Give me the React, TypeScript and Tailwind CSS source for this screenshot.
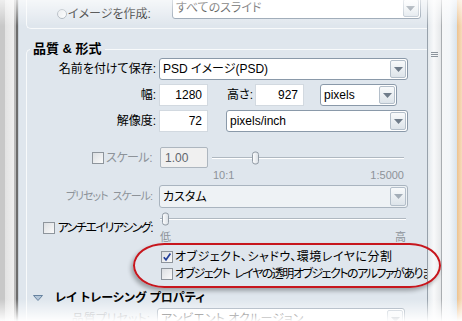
import React from "react";

const font = "font-['Liberation_Sans','Noto_Sans_CJK_JP',sans-serif]";

function Arrow({ disabled }: { disabled?: boolean }) {
  return (
    <div className="my-px mr-px flex w-[16px] items-center justify-center rounded-[2px] border border-[#b4bfca] bg-[linear-gradient(#f8fafb,#dde4ea)]">
      <svg width="9" height="5" viewBox="0 0 9 5">
        <path d="M0 0h9L4.5 5z" fill={disabled ? "#a3adb7" : "#6f7c8a"} />
      </svg>
    </div>
  );
}

function Select({ value, className, disabled }: { value: string; className?: string; disabled?: boolean }) {
  return (
    <div
      className={`flex h-[22px] shrink-0 items-stretch rounded-[3px] border ${
        disabled ? "border-[#a9b4bf] bg-[#eef2f5]" : "border-[#8a99a9] bg-white"
      } ${className ?? ""}`}
    >
      <span className="flex flex-1 items-center overflow-hidden whitespace-nowrap pl-[3px]">{value}</span>
      <Arrow disabled={disabled} />
    </div>
  );
}

function Field({ value, className, disabled }: { value: string; className?: string; disabled?: boolean }) {
  return (
    <div
      className={`flex shrink-0 items-center border ${
        disabled
          ? "h-[21px] justify-start rounded-[2px] border-[#adb6bf] bg-[#f0f0f0] pl-[4px] text-[#5f666d]"
          : "h-[22px] justify-end border-[#d2d9e0] bg-white pr-[5px]"
      } ${className ?? ""}`}
    >
      {value}
    </div>
  );
}

function Check({ checked }: { checked?: boolean }) {
  return (
    <span className="flex h-[12px] w-[12px] shrink-0 items-center justify-center border border-[#8e959c] bg-[linear-gradient(135deg,#dcdfe2,#fafafa)]">
      {checked && (
        <svg width="10" height="10" viewBox="0 0 10 10">
          <path d="M1.8 5.2 L4 7.8 L8.4 1.6" fill="none" stroke="#23409a" strokeWidth="1.7" />
        </svg>
      )}
    </span>
  );
}

function Slider({ thumb, className }: { thumb: string; className?: string }) {
  return (
    <div className={`relative ${className ?? ""}`}>
      <div className="absolute left-0 right-[2px] top-1/2 h-[2px] -translate-y-1/2 border-t border-[#afb8c1] bg-white" />
      <div
        className={`absolute top-1/2 h-[13px] w-[7px] -translate-y-1/2 rounded-[3px] border border-[#939ca6] bg-[linear-gradient(to_right,#fbfcfd,#dde2e7)] ${thumb}`}
      />
    </div>
  );
}

function Label({ children, className }: { children: React.ReactNode; className?: string }) {
  return <span className={`w-[129px] shrink-0 whitespace-nowrap text-right ${className ?? ""}`}>{children}</span>;
}

export default function App() {
  return (
    <div
      className={`relative flex h-[321px] w-[462px] overflow-hidden bg-white text-[12px] leading-none text-black ${font} [font-feature-settings:'palt']`}
    >
      {/* left window frame */}
      <div className="flex w-[19px] shrink-0">
        <div className="w-[5px] bg-[#c8c8c8]" />
        <div className="w-[9px] bg-[linear-gradient(to_right,#e2e2e2,#efefef)]" />
        <div className="w-[2px] bg-[#bababa]" />
        <div className="w-[2px] bg-[#6c6c6c]" />
        <div className="w-[1px] bg-[#c9d1d8]" />
      </div>

      {/* panel */}
      <div className="flex w-[408px] shrink-0 flex-col overflow-hidden bg-[#dfe6ed]">
        {/* previous group, bottom edge only */}
        <div className="ml-[7px] flex h-[29px] shrink-0 items-start rounded-bl-[5px] border-b border-l border-[#f8fafb]">
          <div className="ml-[30px] mt-[8px] flex items-center gap-[1px]">
            <span className="h-[10px] w-[10px] rounded-full border border-[#9ea8b2] bg-[linear-gradient(135deg,#dfe3e7,#ffffff)]" />
            <span className="whitespace-nowrap">イメージを作成:</span>
          </div>
          <Select className="-mt-[3px] ml-[21px] w-[249px]" value="すべてのスライド" />
        </div>

        {/* quality & format group */}
        <fieldset className="ml-[7px] mt-[13px] min-w-0 flex-1 rounded-tl-[5px] border-l border-t border-[#f8fafb] pt-[2px]">
          <legend className="ml-[3px] px-[3px] text-[13px] font-bold leading-[14px]">品質 &amp; 形式</legend>

          <div className="flex h-[22px] items-center">
            <Label>名前を付けて保存:</Label>
            <Select className="ml-[3px] w-[249px]" value="PSD イメージ(PSD)" />
          </div>

          <div className="mt-[4px] flex h-[22px] items-center">
            <Label>幅:</Label>
            <Field className="ml-[3px] w-[49px]" value="1280" />
            <span className="w-[45px] text-right">高さ:</span>
            <Field className="ml-[2px] w-[49px]" value="927" />
            <Select className="ml-[16px] w-[77px]" value="pixels" />
          </div>

          <div className="mt-[4px] flex h-[22px] items-center">
            <Label>解像度:</Label>
            <Field className="ml-[3px] w-[49px]" value="72" />
            <Select className="ml-[18px] w-[182px]" value="pixels/inch" />
          </div>

          <div className="mt-[15px] flex items-start">
            <div className="flex h-[21px] w-[129px] shrink-0 items-center justify-end gap-[2px] pr-[4px] text-[#8d9399]">
              <Check />
              <span className="tracking-[-0.5px]">スケール:</span>
            </div>
            <Field disabled className="ml-[4px] w-[48px]" value="1.00" />
            <div className="ml-[4px] w-[194px]">
              <Slider className="h-[21px]" thumb="left-[40px]" />
              <div className="mt-[2px] flex justify-between pl-px pr-[2px] text-[11px] leading-[11px] text-[#8d9399]">
                <span>10:1</span>
                <span>1:5000</span>
              </div>
            </div>
          </div>

          <div className="mt-[4px] flex h-[23px] items-center">
            <Label className="pr-[4px] text-[11px] tracking-[-1px] text-[#8d9399]">
              プリセット<span className="inline-block w-[5px]" />スケール:
            </Label>
            <Select disabled className="ml-[3px] h-[23px] w-[249px]" value="カスタム" />
          </div>

          <div className="mt-[5px] flex items-start">
            <div className="mt-[8px] flex h-[14px] w-[129px] shrink-0 items-center justify-end gap-[3px] pr-[4px]">
              <Check />
              <span className="whitespace-nowrap tracking-[-1.5px]">アンチエイリアシング:</span>
            </div>
            <div className="ml-[4px] w-[248px]">
              <Slider className="h-[12px]" thumb="left-[2px]" />
              <div className="mt-[7px] flex justify-between pr-[2px] text-[11px] leading-[11px] text-[#8d9399]">
                <span>低</span>
                <span>高</span>
              </div>
            </div>
          </div>

          <div className="ml-[134px] mt-[7px] flex h-[14px] items-center gap-[2px]">
            <Check checked />
            <span className="whitespace-nowrap tracking-[0.5px]">オブジェクト、シャドウ、環境レイヤに分割</span>
          </div>
          <div className="ml-[134px] mt-[3px] flex h-[14px] items-center gap-[2px]">
            <Check />
            <span className="whitespace-nowrap tracking-[-1.5px]">
              オブジェクト<span className="inline-block w-[5px]" />レイヤの透明オブジェクトのアルファがあります
            </span>
          </div>

          <div className="ml-[6px] mt-[10px] flex h-[14px] items-center">
            <svg width="10" height="6" viewBox="0 0 10 6">
              <path d="M0.5 0.5h9L5 5.5z" fill="#b4c6d8" stroke="#66829f" strokeWidth="1" />
            </svg>
            <span className="ml-[12px] whitespace-nowrap text-[12px] font-bold leading-[14px]">レイ トレーシング プロパティ</span>
          </div>

          <div className="mt-[3px] flex h-[22px] items-center">
            <Label className="pr-[6px] text-[#8d9399]">品質プリセット:</Label>
            <Select className="ml-[1px] w-[248px]" value="アンビエント オクルージョン" />
          </div>
        </fieldset>
      </div>

      {/* splitter / scrollbar */}
      <div className="w-px shrink-0 bg-[#97a1ab]" />
      <div className="flex w-[14px] shrink-0 flex-col items-center border-r border-[#a9adb1] bg-[linear-gradient(to_right,#e4e9ed,#f8f9fa_45%,#e5e7e9)] pt-[52px]">
        <div className="h-px w-[7px] bg-[#8c949c]" />
        <div className="mt-px h-px w-[7px] bg-[#8c949c]" />
        <div className="mt-px h-px w-[7px] bg-[#8c949c]" />
      </div>
      <div className="w-[15px] shrink-0 bg-[linear-gradient(to_right,#f6f7f8,#f3f6f9_50%,#d9e3ec)]" />
      <div className="w-[5px] shrink-0 bg-[linear-gradient(to_right,#eec38f,#f6dcbd)]" />

      {/* red annotation */}
      <div className="absolute left-[133px] top-[243px] h-[45px] w-[308px] rounded-[32px/23px] border-2 border-[#c7161d] shadow-[-2px_3px_4px_rgba(0,0,0,0.3)]" />

      {/* photo fades */}
      <div className="pointer-events-none absolute inset-x-0 top-0 h-[26px] bg-[linear-gradient(to_bottom,rgba(255,255,255,0.7),rgba(255,255,255,0))]" />
      <div className="pointer-events-none absolute inset-x-0 bottom-0 h-[22px] bg-[linear-gradient(to_top,rgba(255,255,255,0.96),rgba(255,255,255,0))]" />
    </div>
  );
}
